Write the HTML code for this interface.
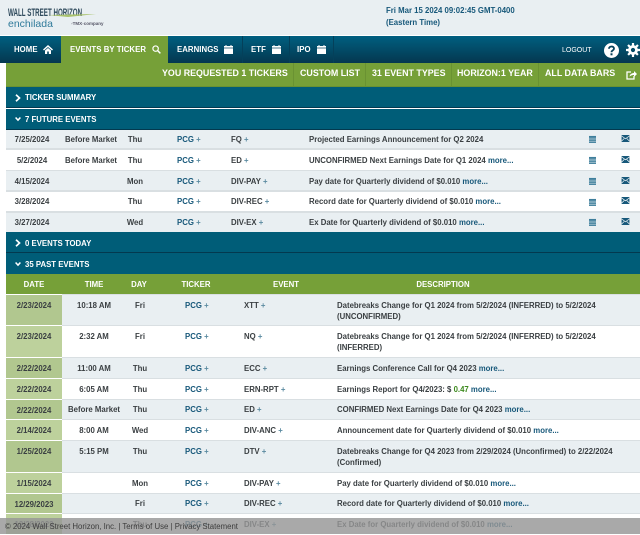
<!DOCTYPE html>
<html><head><meta charset="utf-8"><style>
html,body{margin:0;padding:0;background:#fff}
body{width:640px;height:534px;overflow:hidden;position:relative;font:bold 7.8px/12px "Liberation Sans",sans-serif;color:#3a3f42;filter:blur(.3px)}
div,span.a{position:absolute;white-space:nowrap}
svg{position:absolute;display:block}
.top{left:0;top:0;width:640px;height:35px;background:#e9eff2}
.nav{left:0;top:36px;width:640px;height:27px;background:linear-gradient(#005f80,#04374f)}
.sep{top:36px;width:1px;height:27px;background:#04405a}
.tab{left:61px;top:36px;width:107px;height:27px;background:#76a038}
.n{color:#fff;top:44px;font-size:7.8px;letter-spacing:.05px}
.sub{left:6px;top:63px;width:634px;height:23px;background:#76a038;border-bottom:1px solid #6a9232}
.s{color:#fff;top:67px;font-size:8.9px}
.ss{top:63px;width:1px;height:23px;background:#6a9232}
.sec{left:6px;width:634px;height:20px;background:#005d78;border-bottom:1px solid #03394f}
.h{color:#fff;font-size:7.8px;top:4px;left:19px;padding-top:1px}
.chev{left:9px;top:6px}
.r{left:6px;width:634px;background:#fff}
.g{background:#e9eff2}
.d,.t,.w,.k,.e,.x,.p,.ph{padding-top:1px}
.d{left:0;width:52px;text-align:center}
.t{left:45px;width:80px;text-align:center}
.w{left:104px;width:50px;text-align:center}
.k{left:171px;color:#17587a}
.e{left:225px}
.x{left:303px}
m{color:#17587a}
.p{left:0;width:56px;top:0;bottom:0;background:#bdd19c;text-align:center}
.g .p{background:#b1c78f}
.ph{color:#fff;top:4px;width:80px;text-align:center}
.foot{left:0;top:518px;width:640px;height:16px;background:rgba(150,150,150,.82)}
.foot span{position:absolute;left:5px;top:3px;font:normal 7.8px/12px "Liberation Sans",sans-serif;color:#3c3c3c;white-space:nowrap}
.pl{color:#5a8aa0}
</style></head><body>

<div class="top"></div>
<div style="left:8px;top:7px;font:bold 11px/12px 'Liberation Sans',sans-serif;color:#2f4a5c;transform:scaleX(.565);transform-origin:left top">WALL STREET HORIZON</div>
<svg style="left:48px;top:11px" width="50" height="8"><path d="M0 4 L48 3 L20 6Z" fill="#a9c26c"/></svg>
<div style="left:8px;top:18px;font:normal 10.5px/12px 'Liberation Sans',sans-serif;color:#2f7a9a">enchilada</div>
<div style="left:71px;top:20px;font:bold 4.5px/8px 'Liberation Sans',sans-serif;color:#556">◦TMX◦company</div>
<div style="left:386px;top:5px;color:#17587a">Fri Mar 15 2024 09:02:45 GMT-0400</div>
<div style="left:386px;top:17px;color:#17587a">(Eastern Time)</div>

<div class="nav"></div>
<div class="tab"></div>
<div class="sep" style="left:242px"></div><div class="sep" style="left:289px"></div><div class="sep" style="left:333px"></div>
<div class="n" style="left:14px">HOME</div>
<svg style="left:43px;top:45px" width="10" height="9" viewBox="0 0 10 9"><path d="M5 0L0 4.500l1 1L5 2l4 3.500 1-1zM2 5.500V9h2.200V6.500h1.600V9H8V5.500L5 3z" fill="#fff"/></svg>
<div class="n" style="left:70px">EVENTS BY TICKER</div>
<svg style="left:152px;top:45px" width="9" height="9" viewBox="0 0 10 10"><circle cx="4" cy="4" r="3" fill="none" stroke="#fff" stroke-width="1.300"/><path d="M6.300 6.300L9.300 9.300" stroke="#fff" stroke-width="1.600"/></svg>
<div class="n" style="left:177px">EARNINGS</div>
<svg style="left:224px;top:45px" width="9" height="9" viewBox="0 0 9 9"><path d="M0 1h9v8H0z" fill="#fff"/><path d="M0 3h9" stroke="#04405a" stroke-width=".7"/><path d="M2 0v2M7 0v2" stroke="#fff"/></svg>
<div class="n" style="left:251px">ETF</div>
<svg style="left:272px;top:45px" width="9" height="9" viewBox="0 0 9 9"><path d="M0 1h9v8H0z" fill="#fff"/><path d="M0 3h9" stroke="#04405a" stroke-width=".7"/><path d="M2 0v2M7 0v2" stroke="#fff"/></svg>
<div class="n" style="left:297px">IPO</div>
<svg style="left:317px;top:45px" width="9" height="9" viewBox="0 0 9 9"><path d="M0 1h9v8H0z" fill="#fff"/><path d="M0 3h9" stroke="#04405a" stroke-width=".7"/><path d="M2 0v2M7 0v2" stroke="#fff"/></svg>
<div style="left:562px;top:45px;color:#fff;font:normal 7px/12px 'Liberation Sans',sans-serif">LOGOUT</div>
<svg style="left:604px;top:43px" width="15" height="15" viewBox="0 0 15 15"><circle cx="7.500" cy="7.500" r="7.500" fill="#fff"/><path d="M5 5.800C5 2.800 10 2.800 10 5.600C10 7.500 7.500 7.300 7.500 9.200" fill="none" stroke="#04405a" stroke-width="1.800"/><rect x="6.500" y="10.300" width="2" height="2" fill="#04405a"/></svg>
<svg style="left:626px;top:43px" width="14" height="14" viewBox="0 0 14 14"><circle cx="7" cy="7" r="3.500" fill="none" stroke="#fff" stroke-width="2.800"/><path d="M7 0v14M0 7h14M2 2l10 10M12 2L2 12" stroke="#fff" stroke-width="2.200" stroke-dasharray="2.500 9 2.500"/></svg>

<div class="sub"></div>
<div class="ss" style="left:293px"></div><div class="ss" style="left:365px"></div><div class="ss" style="left:451px"></div><div class="ss" style="left:538px"></div>
<div class="s" style="left:162px">YOU REQUESTED 1 TICKERS</div>
<div class="s" style="left:300px">CUSTOM LIST</div>
<div class="s" style="left:372px">31 EVENT TYPES</div>
<div class="s" style="left:457px">HORIZON:1 YEAR</div>
<div class="s" style="left:545px">ALL DATA BARS</div>
<svg style="left:626px;top:70px" width="11" height="10" viewBox="0 0 11 10"><path d="M5 2H1v7h7V6" fill="none" stroke="#fff" stroke-width="1.300"/><path d="M3.500 6.500C4 4 6 3 8 3V1l3 3-3 3V5C6 5 5 5.500 3.500 6.500z" fill="#fff"/></svg>

<div style="left:6px;top:130px;width:634px;height:102px;background:#d9dfe2"></div>
<div style="left:62px;top:294px;width:578px;height:224px;background:#d9dfe2"></div>

<div class="sec" style="top:87px"><svg class="chev" style="top:7px" width="6" height="8" viewBox="0 0 6 8"><path d="M1 .800L4.500 4 1 7.200" fill="none" stroke="#fff" stroke-width="1.700"/></svg><div class="h">TICKER SUMMARY</div></div>
<div class="sec" style="top:109px"><svg class="chev" style="top:7px" width="6" height="6" viewBox="0 0 8 6"><path d="M.8 1L4 4.500 7.200 1" fill="none" stroke="#fff" stroke-width="2"/></svg><div class="h">7 FUTURE EVENTS</div></div>

<div class="r g" style="top:130px;height:18px"><div class="d" style="top:3px">7/25/2024</div><div class="t" style="top:3px">Before Market</div><div class="w" style="top:3px">Thu</div><div class="k" style="top:3px">PCG <span class="pl">+</span></div><div class="e" style="top:3px">FQ <span class="pl">+</span></div><div class="x" style="top:3px">Projected Earnings Announcement for Q2 2024</div>
<svg style="left:583px;top:5px" width="7" height="8" viewBox="0 0 8 9"><path d="M0 1h8v8H0z" fill="#3f7f9c"/><path d="M0 3.500h8M0 5.500h8M0 7.300h8" stroke="#e9eff2" stroke-width=".5"/></svg>
<svg style="left:615px;top:5px" width="9" height="7" viewBox="0 0 9 8"><path d="M0 0h9v8H0z" fill="#17587a"/><path d="M0 1l4.500 3.300L9 1M0 7l3-3M9 7L6 4" fill="none" stroke="#e9eff2" stroke-width=".8"/></svg></div>

<div class="r" style="top:150px;height:20px"><div class="d" style="top:4px">5/2/2024</div><div class="t" style="top:4px">Before Market</div><div class="w" style="top:4px">Thu</div><div class="k" style="top:4px">PCG <span class="pl">+</span></div><div class="e" style="top:4px">ED <span class="pl">+</span></div><div class="x" style="top:4px">UNCONFIRMED Next Earnings Date for Q1 2024 <m>more...</m></div>
<svg style="left:583px;top:6px" width="7" height="8" viewBox="0 0 8 9"><path d="M0 1h8v8H0z" fill="#3f7f9c"/><path d="M0 3.500h8M0 5.500h8M0 7.300h8" stroke="#fff" stroke-width=".5"/></svg>
<svg style="left:615px;top:6px" width="9" height="7" viewBox="0 0 9 8"><path d="M0 0h9v8H0z" fill="#17587a"/><path d="M0 1l4.500 3.300L9 1M0 7l3-3M9 7L6 4" fill="none" stroke="#fff" stroke-width=".8"/></svg></div>

<div class="r g" style="top:171px;height:19px"><div class="d" style="top:4px">4/15/2024</div><div class="w" style="top:4px">Mon</div><div class="k" style="top:4px">PCG <span class="pl">+</span></div><div class="e" style="top:4px">DIV-PAY <span class="pl">+</span></div><div class="x" style="top:4px">Pay date for Quarterly dividend of $0.010 <m>more...</m></div>
<svg style="left:583px;top:6px" width="7" height="8" viewBox="0 0 8 9"><path d="M0 1h8v8H0z" fill="#3f7f9c"/><path d="M0 3.500h8M0 5.500h8M0 7.300h8" stroke="#e9eff2" stroke-width=".5"/></svg>
<svg style="left:615px;top:6px" width="9" height="7" viewBox="0 0 9 8"><path d="M0 0h9v8H0z" fill="#17587a"/><path d="M0 1l4.500 3.300L9 1M0 7l3-3M9 7L6 4" fill="none" stroke="#e9eff2" stroke-width=".8"/></svg></div>

<div class="r" style="top:192px;height:19px"><div class="d" style="top:3px">3/28/2024</div><div class="w" style="top:3px">Thu</div><div class="k" style="top:3px">PCG <span class="pl">+</span></div><div class="e" style="top:3px">DIV-REC <span class="pl">+</span></div><div class="x" style="top:3px">Record date for Quarterly dividend of $0.010 <m>more...</m></div>
<svg style="left:583px;top:6px" width="7" height="8" viewBox="0 0 8 9"><path d="M0 1h8v8H0z" fill="#3f7f9c"/><path d="M0 3.500h8M0 5.500h8M0 7.300h8" stroke="#fff" stroke-width=".5"/></svg>
<svg style="left:615px;top:5px" width="9" height="7" viewBox="0 0 9 8"><path d="M0 0h9v8H0z" fill="#17587a"/><path d="M0 1l4.500 3.300L9 1M0 7l3-3M9 7L6 4" fill="none" stroke="#fff" stroke-width=".8"/></svg></div>

<div class="r g" style="top:213px;height:19px"><div class="d" style="top:3px">3/27/2024</div><div class="w" style="top:3px">Wed</div><div class="k" style="top:3px">PCG <span class="pl">+</span></div><div class="e" style="top:3px">DIV-EX <span class="pl">+</span></div><div class="x" style="top:3px">Ex Date for Quarterly dividend of $0.010 <m>more...</m></div>
<svg style="left:583px;top:5px" width="7" height="8" viewBox="0 0 8 9"><path d="M0 1h8v8H0z" fill="#3f7f9c"/><path d="M0 3.500h8M0 5.500h8M0 7.300h8" stroke="#e9eff2" stroke-width=".5"/></svg>
<svg style="left:615px;top:5px" width="9" height="7" viewBox="0 0 9 8"><path d="M0 0h9v8H0z" fill="#17587a"/><path d="M0 1l4.500 3.300L9 1M0 7l3-3M9 7L6 4" fill="none" stroke="#e9eff2" stroke-width=".8"/></svg></div>

<div class="sec" style="top:232px"><svg class="chev" style="top:7px" width="6" height="8" viewBox="0 0 6 8"><path d="M1 .800L4.500 4 1 7.200" fill="none" stroke="#fff" stroke-width="1.700"/></svg><div class="h" style="top:5px">0 EVENTS TODAY</div></div>
<div class="sec" style="top:253px;height:21px;border:0"><svg class="chev" style="top:8px" width="6" height="6" viewBox="0 0 8 6"><path d="M.8 1L4 4.500 7.200 1" fill="none" stroke="#fff" stroke-width="2"/></svg><div class="h" style="top:5px">35 PAST EVENTS</div></div>

<div class="r" style="top:274px;height:20px;background:#76a038">
<div class="ph" style="left:-12px">DATE</div><div class="ph" style="left:48px">TIME</div><div class="ph" style="left:93px">DAY</div><div class="ph" style="left:150px">TICKER</div><div class="ph" style="left:240px">EVENT</div><div class="ph" style="left:397px">DESCRIPTION</div></div>

<div class="r g" style="top:295px;height:30px"><div class="p"><span style="line-height:20px">2/23/2024</span></div><div class="t" style="top:4px;left:48px">10:18 AM</div><div class="w" style="top:4px;left:109px">Fri</div><div class="k" style="top:4px;left:179px">PCG <span class="pl">+</span></div><div class="e" style="top:4px;left:238px">XTT <span class="pl">+</span></div><div class="x" style="top:4px;left:331px;line-height:11px">Datebreaks Change for Q1 2024 from 5/2/2024 (INFERRED) to 5/2/2024<br>(UNCONFIRMED)</div></div>

<div class="r" style="top:326px;height:31px"><div class="p"><span style="line-height:20px">2/23/2024</span></div><div class="t" style="top:4px;left:48px">2:32 AM</div><div class="w" style="top:4px;left:109px">Fri</div><div class="k" style="top:4px;left:179px">PCG <span class="pl">+</span></div><div class="e" style="top:4px;left:238px">NQ <span class="pl">+</span></div><div class="x" style="top:4px;left:331px;line-height:11px">Datebreaks Change for Q1 2024 from 5/2/2024 (INFERRED) to 5/2/2024<br>(INFERRED)</div></div>

<div class="r g" style="top:358px;height:20px"><div class="p"><span style="line-height:20px">2/22/2024</span></div><div class="t" style="top:4px;left:48px">11:00 AM</div><div class="w" style="top:4px;left:109px">Thu</div><div class="k" style="top:4px;left:179px">PCG <span class="pl">+</span></div><div class="e" style="top:4px;left:238px">ECC <span class="pl">+</span></div><div class="x" style="top:4px;left:331px">Earnings Conference Call for Q4 2023 <m>more...</m></div></div>

<div class="r" style="top:379px;height:20px"><div class="p"><span style="line-height:20px">2/22/2024</span></div><div class="t" style="top:4px;left:48px">6:05 AM</div><div class="w" style="top:4px;left:109px">Thu</div><div class="k" style="top:4px;left:179px">PCG <span class="pl">+</span></div><div class="e" style="top:4px;left:238px">ERN-RPT <span class="pl">+</span></div><div class="x" style="top:4px;left:331px">Earnings Report for Q4/2023: $ <span style="color:#3d8a1e">0.47</span> <m>more...</m></div></div>

<div class="r g" style="top:400px;height:19px"><div class="p"><span style="line-height:19px">2/22/2024</span></div><div class="t" style="top:3px;left:48px">Before Market</div><div class="w" style="top:3px;left:109px">Thu</div><div class="k" style="top:3px;left:179px">PCG <span class="pl">+</span></div><div class="e" style="top:3px;left:238px">ED <span class="pl">+</span></div><div class="x" style="top:3px;left:331px">CONFIRMED Next Earnings Date for Q4 2023 <m>more...</m></div></div>

<div class="r" style="top:420px;height:20px"><div class="p"><span style="line-height:20px">2/14/2024</span></div><div class="t" style="top:4px;left:48px">8:00 AM</div><div class="w" style="top:4px;left:109px">Wed</div><div class="k" style="top:4px;left:179px">PCG <span class="pl">+</span></div><div class="e" style="top:4px;left:238px">DIV-ANC <span class="pl">+</span></div><div class="x" style="top:4px;left:331px">Announcement date for Quarterly dividend of $0.010 <m>more...</m></div></div>

<div class="r g" style="top:441px;height:31px"><div class="p"><span style="line-height:20px">1/25/2024</span></div><div class="t" style="top:4px;left:48px">5:15 PM</div><div class="w" style="top:4px;left:109px">Thu</div><div class="k" style="top:4px;left:179px">PCG <span class="pl">+</span></div><div class="e" style="top:4px;left:238px">DTV <span class="pl">+</span></div><div class="x" style="top:4px;left:331px;line-height:11px">Datebreaks Change for Q4 2023 from 2/29/2024 (Unconfirmed) to 2/22/2024<br>(Confirmed)</div></div>

<div class="r" style="top:473px;height:20px"><div class="p"><span style="line-height:20px">1/15/2024</span></div><div class="w" style="top:4px;left:109px">Mon</div><div class="k" style="top:4px;left:179px">PCG <span class="pl">+</span></div><div class="e" style="top:4px;left:238px">DIV-PAY <span class="pl">+</span></div><div class="x" style="top:4px;left:331px">Pay date for Quarterly dividend of $0.010 <m>more...</m></div></div>

<div class="r g" style="top:494px;height:19px"><div class="p"><span style="line-height:19px">12/29/2023</span></div><div class="w" style="top:3px;left:109px">Fri</div><div class="k" style="top:3px;left:179px">PCG <span class="pl">+</span></div><div class="e" style="top:3px;left:238px">DIV-REC <span class="pl">+</span></div><div class="x" style="top:3px;left:331px">Record date for Quarterly dividend of $0.010 <m>more...</m></div></div>

<div class="r" style="top:514px;height:20px"><div class="p"><span style="line-height:20px">12/28/2023</span></div><div class="w" style="top:4px;left:109px">Thu</div><div class="k" style="top:4px;left:179px">PCG <span class="pl">+</span></div><div class="e" style="top:4px;left:238px">DIV-EX <span class="pl">+</span></div><div class="x" style="top:4px;left:331px">Ex Date for Quarterly dividend of $0.010 <m>more...</m></div></div>

<div class="foot"><span>© 2024 Wall Street Horizon, Inc. | Terms of Use | Privacy Statement</span></div>
</body></html>
